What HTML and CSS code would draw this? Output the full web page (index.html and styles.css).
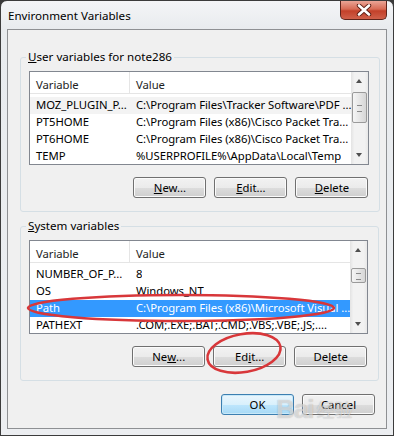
FILE: index.html
```html
<!DOCTYPE html>
<html lang="en">
<head>
	<meta charset="UTF-8">
	<title>Environment Variables</title>
	<link rel="stylesheet" href="styles.css">
</head>
<body>
	<div class="window">
		<div class="titlebar">
			<span class="title">Environment Variables</span>
			<a href="javascript:;" class="close">
				<svg width="16" height="12" viewBox="0 0 16 12"><path d="M3 1.5L13 10.5M13 1.5L3 10.5" stroke="#5b1c12" stroke-width="4.4" stroke-linecap="round"/><path d="M3 1.5L13 10.5M13 1.5L3 10.5" stroke="#fff" stroke-width="2.6" stroke-linecap="round"/></svg>
			</a>
		</div>
		<div class="client">
			<fieldset class="group">
				<legend><u>U</u>ser variables for note286</legend>
				<div class="list">
					<div class="list-main">
						<div class="list-head"><span class="c1">Variable</span><span class="c2">Value</span></div>
						<div class="row hot"><span class="c1">MOZ_PLUGIN_P...</span><span class="c2">C:\Program Files\Tracker Software\PDF ...</span></div>
						<div class="row"><span class="c1">PT5HOME</span><span class="c2">C:\Program Files (x86)\Cisco Packet Tra...</span></div>
						<div class="row"><span class="c1">PT6HOME</span><span class="c2">C:\Program Files (x86)\Cisco Packet Tra...</span></div>
						<div class="row"><span class="c1">TEMP</span><span class="c2">%USERPROFILE%\AppData\Local\Temp</span></div>
					</div>
					<div class="scroll">
						<span class="arr up"></span>
						<span class="thumb user-thumb"></span>
						<span class="arr down"></span>
					</div>
				</div>
				<div class="buttons">
					<a href="javascript:;" class="btn"><u>N</u>ew...</a>
					<a href="javascript:;" class="btn"><u>E</u>dit...</a>
					<a href="javascript:;" class="btn"><u>D</u>elete</a>
				</div>
			</fieldset>
			<fieldset class="group system">
				<legend><u>S</u>ystem variables</legend>
				<div class="list">
					<div class="list-main">
						<div class="list-head"><span class="c1">Variable</span><span class="c2">Value</span></div>
						<div class="row"><span class="c1">NUMBER_OF_P...</span><span class="c2">8</span></div>
						<div class="row"><span class="c1">OS</span><span class="c2">Windows_NT</span></div>
						<div class="row selected"><span class="c1">Path</span><span class="c2">C:\Program Files (x86)\Microsoft Visual ...</span></div>
						<div class="row"><span class="c1">PATHEXT</span><span class="c2">.COM;.EXE;.BAT;.CMD;.VBS;.VBE;.JS;....</span></div>
					</div>
					<div class="scroll">
						<span class="arr up"></span>
						<span class="thumb sys-thumb"></span>
						<span class="arr down"></span>
					</div>
				</div>
				<div class="buttons">
					<a href="javascript:;" class="btn">Ne<u>w</u>...</a>
					<a href="javascript:;" class="btn">Ed<u>i</u>t...</a>
					<a href="javascript:;" class="btn">De<u>l</u>ete</a>
				</div>
			</fieldset>
			<div class="buttons dialog">
				<a href="javascript:;" class="btn default">OK</a>
				<a href="javascript:;" class="btn">Cancel</a>
			</div>
			<!-- red marks drawn over the screenshot -->
			<svg class="mark mark-path" width="312" height="32" viewBox="0 0 312 32"><ellipse cx="156" cy="16" rx="153" ry="13" fill="none" stroke="#d8373a" stroke-width="2.6"/></svg>
			<svg class="mark mark-edit" width="80" height="44" viewBox="0 0 80 44"><ellipse cx="40" cy="22" rx="37" ry="19" fill="none" stroke="#d8373a" stroke-width="2.6"/></svg>
			<div class="watermark"><span class="bai">Bai</span><span class="jy">经验</span></div>
		</div>
	</div>
</body>
</html>
```
FILE: styles.css
```css
*{margin:0;padding:0;box-sizing:border-box;}
body{background:#3a3a3a;font:11.3px "Noto Sans","Open Sans",sans-serif;color:#000;}
u{text-decoration:underline;text-underline-offset:1px;}

.window{width:394px;height:436px;border:1px solid #3c3c3c;border-radius:7px 7px 0 0;background:linear-gradient(#f4f5f7,#e8ebee 28px,#eceef1);padding:0 6px 6px;display:flex;flex-direction:column;}
.titlebar{height:28px;display:flex;justify-content:space-between;align-items:flex-start;}
.title{padding:7px 0 0 1px;line-height:16px;font-size:11.6px;color:#000;}
.close{width:47px;height:19px;border:1px solid #5e241b;border-top:none;border-radius:0 0 5px 5px;background:linear-gradient(#eba596,#d86b55 45%,#c3412a 55%,#d0604a);display:flex;align-items:center;justify-content:center;}

.client{flex:1;border:1px solid #8e9093;background:#f0f0f0;padding:19px 10px 0 12px;position:relative;overflow:hidden;}

.group{border:1px solid #d5dfe5;border-radius:3px;padding:0 10px 13px 8px;}
.group legend{padding:0 2px;margin-left:-3px;line-height:16px;font-size:11.6px;}
.system{margin-top:6px;}

.list{height:94px;margin-top:6px;border:1px solid #828790;background:#fff;display:flex;}
.list-main{flex:1;overflow:hidden;letter-spacing:-0.05px;}
.list-head{height:22px;display:flex;border-bottom:1px solid #e5e5e5;padding-top:5px;line-height:16px;color:#1e1e1e;margin-bottom:3px;}
.list-head .c1{border-right:1px solid #e5e5e5;margin-top:-5px;padding-top:5px;}
.row{height:17px;line-height:16px;display:flex;white-space:nowrap;}
.c1{width:100px;padding-left:6px;flex:none;overflow:hidden;}
.c2{padding-left:6px;overflow:hidden;}
.row.hot{background:#f3f3f3;}
.row.selected{background:#3399ff;color:#fff;}

.scroll{width:17px;flex:none;background:linear-gradient(90deg,#e3e3e3,#f2f2f2 20%,#f2f2f2 80%,#e8e8e8);display:flex;flex-direction:column;align-items:center;}
.arr{height:17px;width:17px;position:relative;}
.arr::after{content:"";position:absolute;left:5px;top:7px;border-left:3.5px solid transparent;border-right:3.5px solid transparent;}
.arr.up::after{border-bottom:4px solid #4f4f4f;top:7px;}
.arr.down::after{border-top:4px solid #4f4f4f;top:6px;}
.arr.down{margin-top:auto;}
.thumb{width:15px;border:1px solid #9a9a9a;border-radius:2px;background:linear-gradient(90deg,#f5f5f5,#e6e6e6 50%,#d6d6d6);position:relative;}
.thumb::after{content:"";position:absolute;left:4px;top:50%;margin-top:-3px;width:5px;height:5px;border-top:1px solid #8a8a8a;border-bottom:1px solid #8a8a8a;}
.user-thumb{height:31px;margin-top:3px;}
.sys-thumb{height:15px;margin-top:10px;}

.buttons{display:flex;justify-content:flex-end;gap:8px;margin-top:12px;padding-right:1px;}
.btn{width:73px;height:21px;border:1px solid #707070;border-radius:3px;background:linear-gradient(#f2f2f2,#ebebeb 50%,#dddddd 50%,#cfcfcf);box-shadow:inset 0 0 0 1px #fbfbfb;display:flex;align-items:center;justify-content:center;color:#000;text-decoration:none;line-height:16px;}
.btn u{text-decoration:underline;}
.btn.default{border-color:#3c7fb1;background:linear-gradient(#eaf6fd,#d9f0fc 50%,#bee6fd 50%,#a7d9f5);box-shadow:inset 0 0 0 1px #c8e8f8;}
.dialog{margin-top:13px;}

.mark{position:absolute;}
.mark-path{left:17px;top:262px;}
.mark-edit{left:196px;top:301px;transform:rotate(-10deg);}

.watermark{position:absolute;left:268px;top:364px;display:flex;align-items:flex-end;color:rgba(255,255,255,.5);text-shadow:0 0 1px rgba(90,90,90,.45);pointer-events:none;}
.watermark .bai{font:bold 26px "Liberation Sans",sans-serif;letter-spacing:-1px;}
.watermark .jy{font:18px "Noto Sans CJK SC",sans-serif;margin:0 0 3px 3px;}
```
